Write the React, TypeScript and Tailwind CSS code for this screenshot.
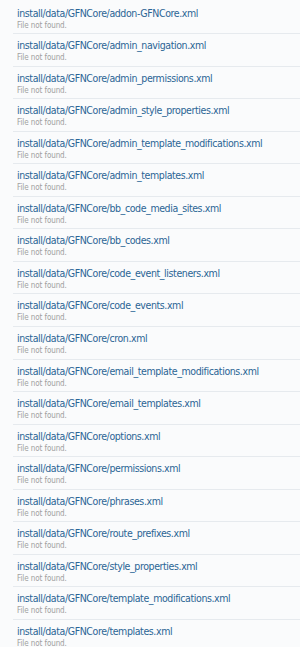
import React from "react";

const files = [
  "addon-GFNCore.xml",
  "admin_navigation.xml",
  "admin_permissions.xml",
  "admin_style_properties.xml",
  "admin_template_modifications.xml",
  "admin_templates.xml",
  "bb_code_media_sites.xml",
  "bb_codes.xml",
  "code_event_listeners.xml",
  "code_events.xml",
  "cron.xml",
  "email_template_modifications.xml",
  "email_templates.xml",
  "options.xml",
  "permissions.xml",
  "phrases.xml",
  "route_prefixes.xml",
  "style_properties.xml",
  "template_modifications.xml",
  "templates.xml",
];

export default function App() {
  return (
    <div className="w-[300px] h-[647px] overflow-hidden bg-[#fafbfc] pt-[1.5px] pl-[13px]" style={{ fontFamily: '"DejaVu Sans Condensed", "DejaVu Sans", sans-serif' }}>
      {files.map((f) => (
        <div key={f} className="h-[32.55px] border-b border-[#e6eaee] pl-[4px] pt-[5px]">
          <div className="text-[10.5px] leading-[13px] tracking-[-0.4px] text-[#2b6595]">install/data/GFNCore/{f}</div>
          <div className="text-[8px] leading-[11px] tracking-[-0.1px] text-[#a0a0a0]">File not found.</div>
        </div>
      ))}
    </div>
  );
}
